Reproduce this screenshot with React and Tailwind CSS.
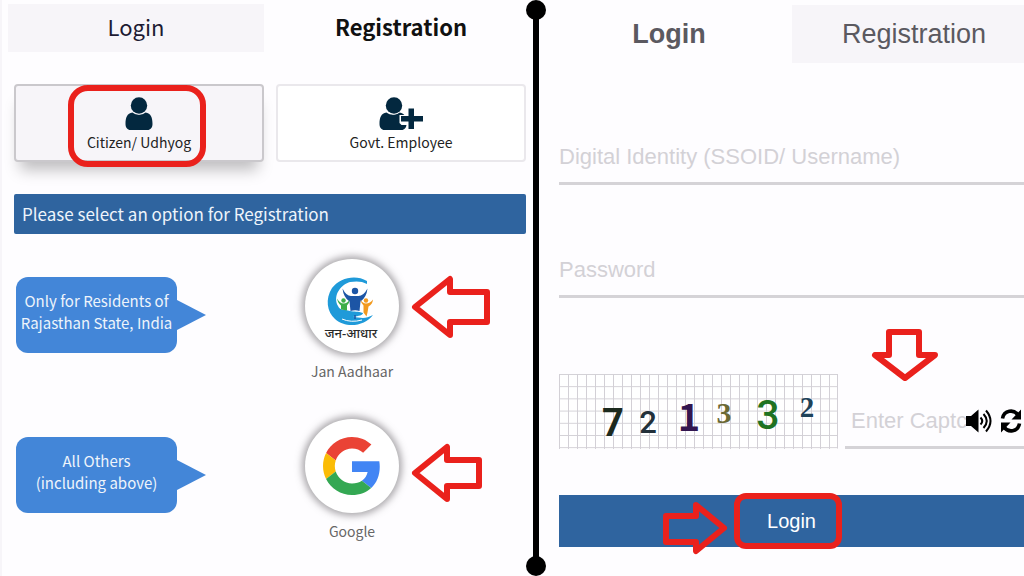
import React, { useState } from 'react';

const RED = '#ea211c';

const UserIcon = () => (
  <svg viewBox="0 0 28 33" className="h-[33px] w-7" fill="#03283f" aria-hidden="true">
    <path d="M7.5 15.5C2 16 0.5 21 0.5 27c0 3.600 2 6 5 6h17c3 0 5-2.400 5-6 0-6-1.500-11-7-11.500-4 3-9 3-13 0z" />
    <circle cx="14" cy="8.500" r="9" fill="#f7f5f9" />
    <circle cx="14" cy="8.500" r="8.200" />
  </svg>
);

const UserPlusIcon = () => (
  <svg viewBox="0 0 44 33" className="h-[33px] w-11" fill="#03283f" aria-hidden="true">
    <path d="M7.500 15.500C2 16 0.500 21 0.500 27c0 3.600 2 6 5 6h17c3 0 5-2.400 5-6 0-6-1.500-11-7-11.500-4 3-9 3-13 0z" />
    <circle cx="15" cy="8.500" r="9" fill="#fff" />
    <circle cx="15" cy="8.500" r="8.200" />
    <path d="M20.500 18H28v-7h8v7h8v8h-8v7h-8v-5h-5.500l-2-2z" fill="#fff" />
    <path d="M29.500 11.500h5.500v7.500h9v5.500h-9V32h-5.500v-7.500H22V19h7.500z" />
  </svg>
);

const JanAadhaarLogo = () => (
  <svg viewBox="0 -5 60 70" className="h-[70px] w-[60px]" role="img" aria-label="Jan Aadhaar">
    <path
      d="M45 5C33 -2 18 2 10 12C3 23 5 36 13 43C24 53 43 50 51 39C47 41 44 42 41 42L31 41C37 40 41 39 41 37C36 35 32 36 28 35C22 33 18 35 16 30C10 19 20 8 28 6C34 5 40 5 45 8z"
      fill="#1f9ad9"
    />
    <path d="M20 43q9 4 20 1" fill="none" stroke="#fff" strokeWidth="1" />
    <circle cx="33" cy="15" r="3.200" fill="#1c55a5" />
    <path d="M20.500 12.500q4 8 9 7.500h7q5 0 9-7.500q-1 9-7 13l-1 9.500q-4-1.500-9 0l-1-9.500q-6-4-7-13z" fill="#1c55a5" />
    <circle cx="21.500" cy="24.500" r="2.200" fill="#3fae49" />
    <path d="M15 22.500q3 5 6.500 5q4 0 6-4q0 4-2.500 6v5l-6-1v-4q-3-2-4-7z" fill="#3fae49" />
    <circle cx="44" cy="24.500" r="2.200" fill="#f29a1f" />
    <path d="M38 23.500q3 4 6 4q4 0 7-4q-0.500 5-4.500 7l-1 6-1 4-3-4v-7q-2-2-3.500-6z" fill="#f29a1f" />
    <path d="M33 39v4" stroke="#1c55a5" strokeWidth="1.500" />
    <text x="29" y="62" textAnchor="middle" fontSize="13" fontWeight="500" fill="#2b2b2b" fontFamily="'Noto Sans', sans-serif">
      जन-आधार
    </text>
  </svg>
);

const GoogleLogo = () => (
  <svg viewBox="0 0 48 48" className="h-[58px] w-[58px]" role="img" aria-label="Google">
    <path fill="#EA4335" d="M24 9.500c3.540 0 6.710 1.220 9.210 3.600l6.850-6.850C35.900 2.380 30.470 0 24 0 14.620 0 6.510 5.380 2.560 13.220l7.980 6.190C12.430 13.720 17.740 9.500 24 9.500z" />
    <path fill="#4285F4" d="M46.980 24.550c0-1.570-.15-3.090-.38-4.550H24v9.020h12.940c-.58 2.960-2.260 5.480-4.780 7.180l7.730 6c4.510-4.180 7.090-10.360 7.090-17.650z" />
    <path fill="#FBBC05" d="M10.530 28.590c-.48-1.450-.76-2.990-.76-4.590s.27-3.140.76-4.590l-7.980-6.190C.92 16.460 0 20.120 0 24c0 3.880.92 7.540 2.560 10.780l7.970-6.190z" />
    <path fill="#34A853" d="M24 48c6.480 0 11.930-2.130 15.890-5.810l-7.730-6c-2.150 1.450-4.920 2.300-8.160 2.300-6.260 0-11.570-4.220-13.470-9.910l-7.980 6.190C6.510 42.620 14.620 48 24 48z" />
  </svg>
);

const ArrowOutline = ({ className, viewBox, d }) => (
  <svg className={className} viewBox={viewBox} fill="none" stroke={RED} strokeWidth="6" strokeLinejoin="round" aria-hidden="true">
    <path d={d} />
  </svg>
);

const SpeakerIcon = () => (
  <svg viewBox="0 0 26 24" className="h-6 w-[26px]" aria-hidden="true">
    <path d="M0 7h5l7.500-6.500v23L5 17H0z" fill="#000" />
    <path d="M14.500 8.500q3.500 3.500 0 7M17.500 5q6.500 7 0 14M20 1.500q9 10.500 0 21" fill="none" stroke="#000" strokeWidth="2" />
  </svg>
);

const RefreshIcon = () => (
  <svg viewBox="0 0 22 24" className="h-6 w-[22px]" aria-hidden="true">
    <path d="M2.500 9.500C4 1 14 0 18 6M19.500 14.500C18 23 8 24 4 18" fill="none" stroke="#000" strokeWidth="3.600" />
    <path d="M21 0.500V10.500H11.500zM1 23.500V13.500H10.500z" fill="#000" />
  </svg>
);

const CaptchaImage = () => (
  <svg viewBox="0 0 279 75" className="w-[279px] shrink-0" role="img" aria-label="Captcha">
    <defs>
      <pattern id="captcha-grid" width="9" height="12.200" patternUnits="userSpaceOnUse">
        <path d="M0.500 0v13M0 0.500h9" stroke="#d3d0d6" strokeWidth="1" fill="none" />
      </pattern>
    </defs>
    <rect width="279" height="75" fill="#fff" />
    <rect width="279" height="75" fill="url(#captcha-grid)" />
    <path d="M278.500 0v74.500" stroke="#d3d0d6" />
    <g textAnchor="middle">
      <text x="54" y="62" fontSize="38" fontWeight="700" fill="#1c2a1e" fontFamily="Roboto, sans-serif">7</text>
      <text x="89" y="59" fontSize="31" fontWeight="500" fill="#22303a" fontFamily="Roboto, sans-serif">2</text>
      <text x="130" y="57" fontSize="38" fontWeight="700" fill="#33164f" fontFamily="'Noto Sans CJK SC', sans-serif">1</text>
      <text x="165" y="49" fontSize="30" fontWeight="700" fill="#6b6934" fontFamily="'Liberation Serif', serif">3</text>
      <text x="209" y="55" fontSize="41" fontWeight="500" fill="#1f7322" fontFamily="Roboto, sans-serif">3</text>
      <text x="248" y="43" fontSize="29" fontWeight="700" fill="#1f4359" fontFamily="'Liberation Serif', serif">2</text>
    </g>
  </svg>
);

const options = [
  {
    name: 'Jan Aadhaar',
    lines: ['Only for Residents of', 'Rajasthan State, India'],
    logo: <JanAadhaarLogo />,
    arrow: (
      <ArrowOutline
        className="mt-4 ml-3 h-16 w-20"
        viewBox="0 0 80 64"
        d="M4 32L39 4V17H76V47H39V60z"
      />
    ),
  },
  {
    name: 'Google',
    lines: ['All Others', '(including above)'],
    logo: <GoogleLogo />,
    arrow: (
      <ArrowOutline
        className="mt-6 ml-3 h-[60px] w-[72px]"
        viewBox="0 0 72 60"
        d="M4 30L36 4V17H68V43H36V56z"
      />
    ),
  },
];

const RegistrationPanel = () => {
  const [userType, setUserType] = useState('citizen');

  return (
    <section className="flex-[524] min-w-0 border-l-2 border-[#f7f5f9] font-['Noto_Sans_CJK_SC',sans-serif]">
      <div className="grid grid-cols-[256fr_250fr] gap-3 pt-1 pl-1.5 text-[22px]">
        <button type="button" className="h-12 bg-[#f7f5f9] pb-1 text-[#1d1b33]">Login</button>
        <button type="button" className="h-12 pb-1 font-bold text-[#111]">Registration</button>
      </div>

      <div className="pl-3">
        {/* User type */}
        <div className="mt-8 grid grid-cols-2 gap-3 text-sm leading-5 text-[#222]">
          <button
            type="button"
            aria-pressed={userType === 'citizen'}
            onClick={() => setUserType('citizen')}
            className="relative flex h-[78px] flex-col items-center gap-0.5 rounded border-2 border-[#cac8cc] bg-[#f7f5f9] pt-[11px] shadow-[0_14px_14px_-6px_rgba(0,0,0,0.25)]"
          >
            <UserIcon />
            <span>Citizen/ Udhyog</span>
            <span className="absolute -top-px left-1/2 h-[82px] w-[138px] -translate-x-[71px] rounded-[20px] border-6 border-[#ea211c]" />
          </button>
          <button
            type="button"
            aria-pressed={userType === 'employee'}
            onClick={() => setUserType('employee')}
            className="flex h-[78px] flex-col items-center gap-0.5 rounded border-2 border-[#eae8ec] bg-white pt-[11px]"
          >
            <UserPlusIcon />
            <span>Govt. Employee</span>
          </button>
        </div>

        <h2 className="mt-8 flex h-10 items-center rounded-xs bg-[#2f649f] px-2 text-[17px] text-[#eef4fb]">
          Please select an option for Registration
        </h2>

        {/* Registration options */}
        <div className="mt-[25px] flex flex-col gap-[38px]">
          {options.map((option) => (
            <div key={option.name} className="grid grid-cols-[291fr_94px_127fr] items-start">
              <div className="mt-[18px] ml-0.5 flex items-center">
                <p className="h-[76px] w-[161px] rounded-xl bg-[#4386d8] pt-[13px] text-center text-[15px] leading-[22px] whitespace-nowrap text-[#eef4fb]">
                  {option.lines[0]}
                  <br />
                  {option.lines[1]}
                </p>
                <svg viewBox="0 0 29 30" className="h-[30px] w-[29px]" fill="#4386d8" aria-hidden="true">
                  <path d="M0 0L29 15L0 30z" />
                </svg>
              </div>
              <button type="button" className="flex flex-col items-center gap-2 text-sm leading-5 whitespace-nowrap text-[#666]">
                <span className="flex size-[94px] items-center justify-center rounded-full bg-white shadow-[0_0_7px_3px_rgba(90,85,90,0.5)]">
                  {option.logo}
                </span>
                {option.name}
              </button>
              {option.arrow}
            </div>
          ))}
        </div>
      </div>
    </section>
  );
};

const Divider = () => (
  <div className="flex w-5 shrink-0 flex-col items-center">
    <span className="size-5 rounded-full bg-black" />
    <span className="-my-1 w-1.5 flex-1 bg-black" />
    <span className="size-5 rounded-full bg-black" />
  </div>
);

const inputClass =
  'w-full border-b-3 border-[#d5d3d7] text-[22px] leading-8 placeholder-[#d3d1d6] outline-none';

const LoginPanel = () => {
  const [form, setForm] = useState({ ssoid: '', password: '', captcha: '' });

  const handleChange = (e) => {
    setForm({ ...form, [e.target.name]: e.target.value });
  };

  return (
    <section className="flex-[478] min-w-0 font-['Liberation_Sans',sans-serif]">
      <div className="grid grid-cols-[246fr_232fr] pt-[5px] text-[27px] text-[#5b5960]">
        <button type="button" className="h-[58px] font-bold">Login</button>
        <button type="button" className="h-[58px] bg-[#f7f5f9] pl-3">Registration</button>
      </div>

      <form className="pl-[13px]" onSubmit={(e) => e.preventDefault()}>
        <input
          type="text"
          name="ssoid"
          aria-label="Digital Identity (SSOID/ Username)"
          placeholder="Digital Identity (SSOID/ Username)"
          value={form.ssoid}
          onChange={handleChange}
          className={`${inputClass} mt-[77px] h-[45px] pb-2`}
        />
        <input
          type="password"
          name="password"
          aria-label="Password"
          placeholder="Password"
          value={form.password}
          onChange={handleChange}
          className={`${inputClass} mt-[68px] h-[45px] pb-2`}
        />

        {/* Captcha */}
        <div className="relative mt-[76px] flex items-end gap-[7px]">
          <CaptchaImage />
          <div className="flex h-[50px] min-w-0 flex-1 items-center border-b-3 border-[#d5d3d7] pr-0.5 pb-1 pl-1.5">
            <input
              type="text"
              name="captcha"
              aria-label="Enter Captcha"
              placeholder="Enter Captcha"
              value={form.captcha}
              onChange={handleChange}
              className="w-0 min-w-0 flex-1 text-[22px] leading-8 placeholder-[#d3d1d6] outline-none"
            />
            <button type="button" aria-label="Play captcha audio"><SpeakerIcon /></button>
            <button type="button" aria-label="Refresh captcha" className="ml-2"><RefreshIcon /></button>
          </div>
          <ArrowOutline
            className="absolute -top-[46px] left-[311px] h-[55px] w-[70px]"
            viewBox="0 0 70 55"
            d="M19 4H49V27H65L35 50L5 27H19z"
          />
        </div>

        <button type="submit" className="relative mt-[46px] h-[52px] w-full bg-[#2f649f] text-xl text-white">
          Login
          <span className="absolute -top-0.5 left-1/2 h-14 w-[108px] -translate-x-[58px] rounded-xl border-6 border-[#ea211c]" />
          <ArrowOutline
            className="absolute top-1.5 left-[103px] h-[54px] w-[67px]"
            viewBox="0 0 67 54"
            d="M4 15H34V4L62 27L34 50V41H4z"
          />
        </button>
      </form>
    </section>
  );
};

const App = () => {
  return (
    <div className="flex min-h-screen overflow-hidden bg-[#fefdff]">
      <RegistrationPanel />
      <Divider />
      <LoginPanel />
    </div>
  );
};

export default App;
